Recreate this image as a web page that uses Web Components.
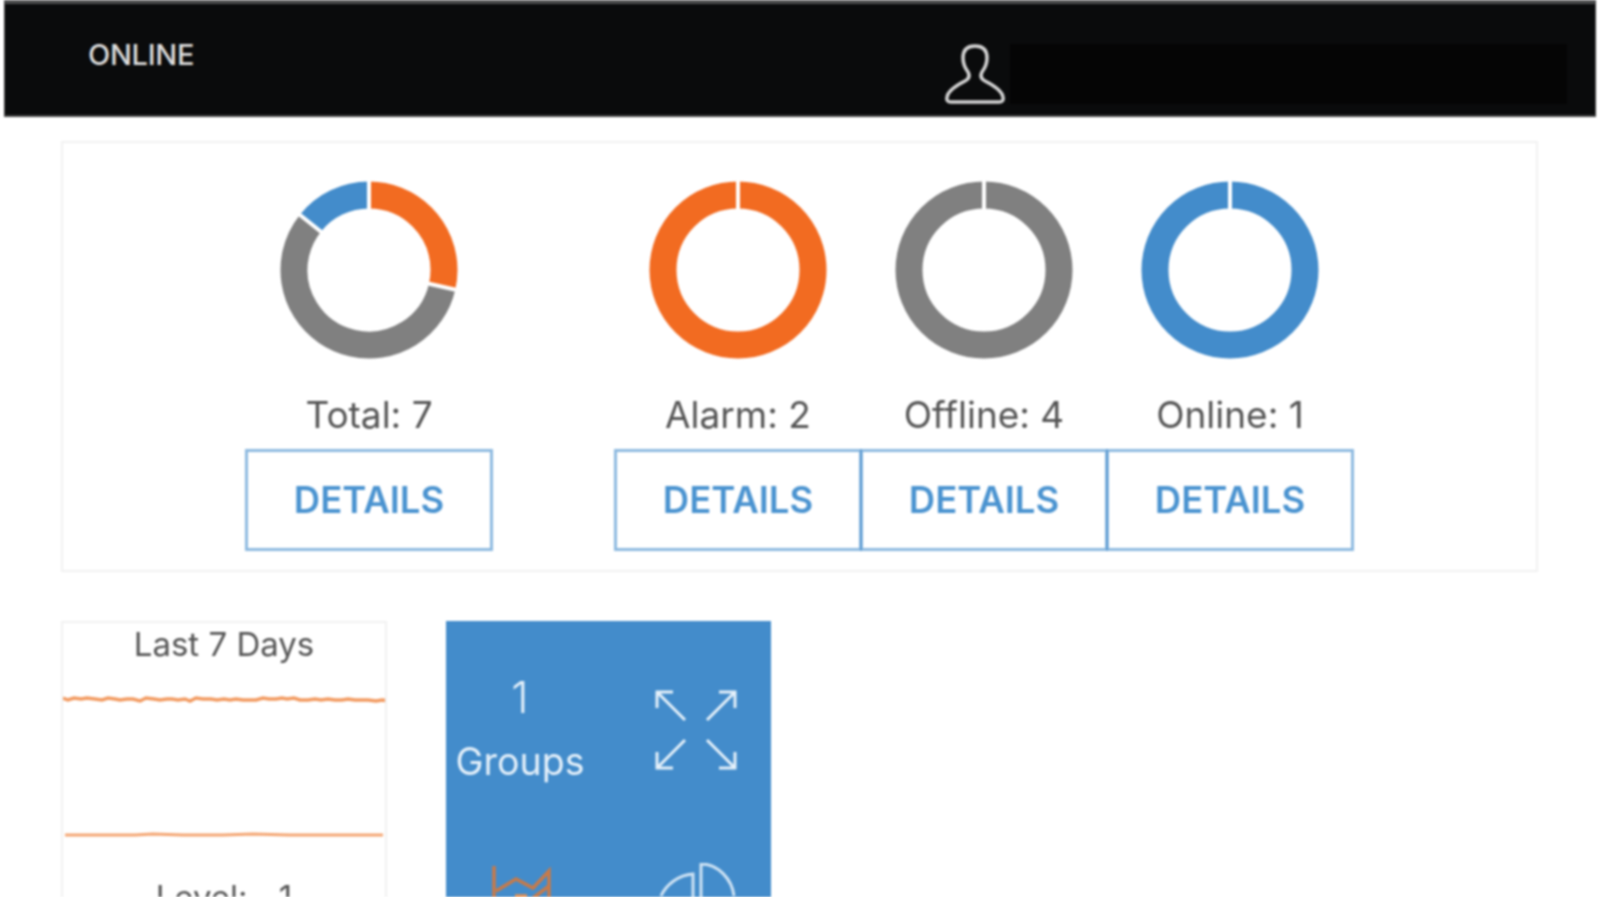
<!DOCTYPE html>
<html>
<head>
<meta charset="utf-8">
<title>Dashboard</title>
<style>
  html, body { margin: 0; padding: 0; background: #fff; }
  body { font-family: Inter, "Liberation Sans", sans-serif; color: #555; }
</style>
</head>
<body>
<dash-page>
  <top-bar slot="top">ONLINE</top-bar>
  <stat-panel slot="stats">
    <stat-donut label="Total: 7" parts="#f26b21:2,#808080:4,#438ccb:1" gap="123"></stat-donut>
    <stat-donut label="Alarm: 2" parts="#f26b21:1"></stat-donut>
    <stat-donut label="Offline: 4" parts="#808080:1"></stat-donut>
    <stat-donut label="Online: 1" parts="#438ccb:1"></stat-donut>
  </stat-panel>
  <trend-card slot="tiles"></trend-card>
  <group-tile slot="tiles"></group-tile>
</dash-page>

<script>
(function () {
  const pageTemplate = document.createElement('template');
  pageTemplate.innerHTML = `
    <style>
      :host { display: block; height: 897px; overflow: hidden; filter: blur(0.9px); }
      .tiles { display: flex; gap: 59px; margin: 49px 0 0 61px; }
    </style>
    <slot name="top"></slot>
    <slot name="stats"></slot>
    <div class="tiles"><slot name="tiles"></slot></div>
  `;

  class DashPage extends HTMLElement {
    constructor() {
      super();
      this.attachShadow({ mode: 'open' });
      this.shadowRoot.appendChild(pageTemplate.content.cloneNode(true));
    }
  }

  const barTemplate = document.createElement('template');
  barTemplate.innerHTML = `
    <style>
      :host {
        display: flex;
        box-sizing: border-box;
        height: 117px;
        margin: 0 3px 0 4px;
        background: #0a0b0c;
        border: solid #444;
        border-width: 4px 1px 2px 1px;
        border-top-color: #4c4d4e;
        color: #ddd;
        font: 500 29px Inter, sans-serif;
        letter-spacing: -0.3px;
      }
      .name { width: 857px; padding: 34px 0 0 83px; line-height: 34px; }
      svg { margin-top: 40px; width: 60px; height: 60px; flex: none; }
      .mask { flex: none; width: 557px; height: 60px; margin: 40px 0 0 5px; background: #050505; }
    </style>
    <div class="name"><slot></slot></div>
    <svg viewBox="0 0 60 60" fill="none" stroke="#d4d4d4" stroke-width="3.5">
      <path d="M30 2C22 2 18 6 18 14C18 20 20 24 23 28C25 32 24 35 20 37C10 42 3 47 2 53Q1 58 6 58H54Q59 58 58 53C57 47 50 42 40 37C36 35 35 32 37 28C40 24 42 20 42 14C42 6 38 2 30 2Z"/>
    </svg>
    <div class="mask"></div>
  `;

  class TopBar extends HTMLElement {
    constructor() {
      super();
      this.attachShadow({ mode: 'open' });
      this.shadowRoot.appendChild(barTemplate.content.cloneNode(true));
    }
  }

  const panelTemplate = document.createElement('template');
  panelTemplate.innerHTML = `
    <style>
      :host {
        display: flex;
        box-sizing: border-box;
        height: 431px;
        margin: 24px 61px 0 61px;
        padding: 38px 0 0 183px;
        border: 2px solid #f1f1f1;
      }
    </style>
    <slot></slot>
  `;

  class StatPanel extends HTMLElement {
    constructor() {
      super();
      this.attachShadow({ mode: 'open' });
      this.shadowRoot.appendChild(panelTemplate.content.cloneNode(true));
    }
  }

  const donutTemplate = document.createElement('template');
  donutTemplate.innerHTML = `
    <style>
      :host {
        display: flex;
        flex-direction: column;
        align-items: center;
        width: 246px;
        flex: none;
      }
      svg { display: block; width: 178px; height: 178px; }
      .label {
        margin-top: 35px;
        font: 400 37px/42px Inter, sans-serif;
        color: #555;
        white-space: nowrap;
      }
      button {
        display: block;
        flex: none;
        width: 248px;
        height: 102px;
        margin-top: 13px;
        padding: 0;
        background: transparent;
        border: 3px solid rgba(67, 140, 203, 0.6);
        font: 600 36.5px Inter, sans-serif;
        color: #4a93d0;
      }
    </style>
    <svg viewBox="0 0 178 178"></svg>
    <div class="label"></div>
    <button type="button">DETAILS</button>
  `;

  class StatDonut extends HTMLElement {
    constructor() {
      super();
      this.attachShadow({ mode: 'open' });
      this.shadowRoot.appendChild(donutTemplate.content.cloneNode(true));
    }

    connectedCallback() {
      this.shadowRoot.querySelector('.label').textContent = this.getAttribute('label');
      if (this.hasAttribute('gap')) {
        this.style.marginRight = `${this.getAttribute('gap')}px`;
      }
      this.drawRing();
    }

    drawRing() {
      const parts = this.getAttribute('parts').split(',').map((part) => {
        const [color, value] = part.split(':');
        return { color, value: Number(value) };
      });
      const total = parts.reduce((sum, part) => sum + part.value, 0);
      let angle = 0;
      let rings = '';
      let cuts = '';
      parts.forEach((part) => {
        const sweep = (part.value / total) * 360;
        rings += `<circle cx="89" cy="89" r="75" fill="none" stroke="${part.color}" stroke-width="27" pathLength="360" stroke-dasharray="${sweep} 360" transform="rotate(${angle - 90} 89 89)"/>`;
        cuts += `<line x1="89" y1="0" x2="89" y2="32" stroke="#fff" stroke-width="4" transform="rotate(${angle} 89 89)"/>`;
        angle += sweep;
      });
      this.shadowRoot.querySelector('svg').innerHTML = rings + cuts;
    }
  }

  const trendTemplate = document.createElement('template');
  trendTemplate.innerHTML = `
    <style>
      :host {
        display: block;
        box-sizing: border-box;
        width: 326px;
        height: 300px;
        border: 2px solid #f1f1f1;
        flex: none;
        font: 400 33px Inter, sans-serif;
        color: #555;
        text-align: center;
      }
      .title { line-height: 44px; height: 44px; margin-top: -1px; }
      svg { display: block; width: 322px; height: 180px; margin-top: 3px; }
      .level { margin-top: 28px; line-height: 40px; word-spacing: 22px; }
    </style>
    <div class="title">Last 7 Days</div>
    <svg viewBox="0 0 322 180" fill="none" stroke="#f29a60" stroke-width="3.5">
      <path d="M0 29l5 2 6-2 7 1 6-1 8 1 7 1 6-2 7 1 5 1 7-1 6 0 7 2 6-3 8 1 6 1 7-1 5 0 6 1 7-1 5 2 6-3 7 1 8 0 6 1 7-1 6 1 6-1 7 1 5 0 8 0 7-2 6 1 7 0 6-1 5 1 7-1 6 2 8 0 7-1 6 1 7-1 7 1 7 0 6-1 7 1 6 0 7 0 8 1 6-1 8 1"/>
      <path d="M2 166l40 0 30 0 18-1 30 1 40 0 30-1 36 1 40 0 54 0" stroke="#f4a673" stroke-width="3"/>
    </svg>
    <div class="level">Level: 1</div>
  `;

  class TrendCard extends HTMLElement {
    constructor() {
      super();
      this.attachShadow({ mode: 'open' });
      this.shadowRoot.appendChild(trendTemplate.content.cloneNode(true));
    }
  }

  const tileTemplate = document.createElement('template');
  tileTemplate.innerHTML = `
    <style>
      :host {
        display: grid;
        grid-template-columns: 148px 177px;
        grid-template-rows: 193px 110px;
        width: 325px;
        height: 300px;
        padding-top: 49px;
        box-sizing: border-box;
        flex: none;
        background: #438ccb;
        color: #e4f0fa;
        font: 400 37.5px Inter, sans-serif;
        text-align: center;
      }
      .count b { display: block; font-weight: 300; font-size: 44px; line-height: 54px; }
      .count span { display: block; line-height: 46px; margin-top: 15px; }
      svg { display: block; }
      .grow { margin: 19px 0 0 60px; }
      .chart { margin: 3px 0 0 43px; }
      .pie { margin: 0 0 0 62px; }
    </style>
    <div class="count"><b>1</b><span>Groups</span></div>
    <svg class="grow" width="84" height="84" viewBox="0 0 84 84" fill="none" stroke="#e4f0fa" stroke-width="3">
      <path d="M31 31L3 3M3 19V3H19M53 31L81 3M65 3H81V19M31 51L3 79M3 63V79H19M53 51L81 79M81 63V79H65"/>
    </svg>
    <svg class="chart" width="66" height="60" viewBox="0 0 66 60" fill="none" stroke="#c87a48" stroke-width="3.5">
      <path d="M5 0V50"/>
      <path d="M7 25L27 13L44 22L60 5V50"/>
      <path d="M44 32L60 20"/>
      <path d="M26 30H38" stroke="#e9904e"/>
    </svg>
    <svg class="pie" width="84" height="60" viewBox="0 0 84 60" fill="none" stroke="#cfe3f4" stroke-width="3">
      <path d="M5 33C10 22 22 12 37 11V50"/>
      <path d="M45 50V1C62 1 76 16 78 33"/>
    </svg>
  `;

  class GroupTile extends HTMLElement {
    constructor() {
      super();
      this.attachShadow({ mode: 'open' });
      this.shadowRoot.appendChild(tileTemplate.content.cloneNode(true));
    }
  }

  customElements.define('dash-page', DashPage);
  customElements.define('top-bar', TopBar);
  customElements.define('stat-panel', StatPanel);
  customElements.define('stat-donut', StatDonut);
  customElements.define('trend-card', TrendCard);
  customElements.define('group-tile', GroupTile);
}());
</script>
</body>
</html>
